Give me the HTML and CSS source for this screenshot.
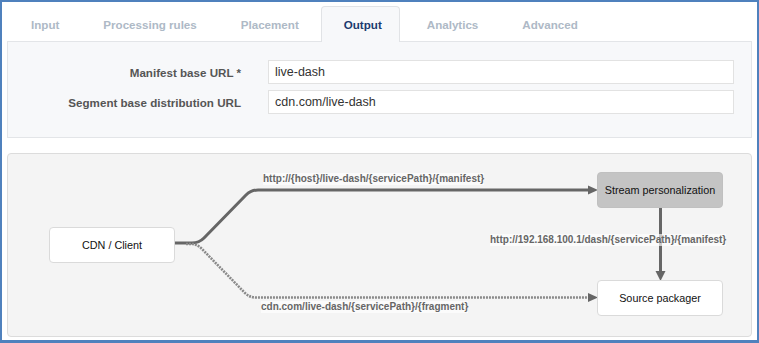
FILE: index.html
```html
<!DOCTYPE html>
<html>
<head>
<meta charset="utf-8">
<link rel="stylesheet" href="styles.css">
</head>
<body>
<div class="page">
  <div class="tabs">
    <div class="tab">Input</div>
    <div class="tab">Processing rules</div>
    <div class="tab">Placement</div>
    <div class="tab active">Output</div>
    <div class="tab">Analytics</div>
    <div class="tab">Advanced</div>
  </div>
  <div class="form-panel">
    <label class="label">Manifest base URL *</label>
    <div class="input">live-dash</div>
    <label class="label">Segment base distribution URL</label>
    <div class="input">cdn.com/live-dash</div>
  </div>
  <div class="diagram">
    <svg class="edges" width="743" height="182" viewBox="8 154 743 182">
      <path d="M175,243 L192,243 Q199,243 204,238 L246,195 Q251,190 258,190 L590,190" fill="none" stroke="#666" stroke-width="3"/>
      <polygon points="588,185.5 598,190 588,194.5" fill="#666"/>
      <path d="M186,244 L193,244 Q198,245 202,249 L244,292 Q249,297.5 256,297.5 L590,297.5" fill="none" stroke="#8a8a8a" stroke-width="2.6" stroke-dasharray="2 1"/>
      <polygon points="588,293 598,297.5 588,302" fill="#666"/>
      <path d="M660.5,208 L660.5,273" fill="none" stroke="#666" stroke-width="3"/>
      <polygon points="655.5,271 665.5,271 660.5,281" fill="#666"/>
    </svg>
    <div class="node node-client">CDN / Client</div>
    <div class="node node-stream">Stream personalization</div>
    <div class="node node-source">Source packager</div>
    <span class="edge-label label-top">http://{host}/live-dash/{servicePath}/{manifest}</span>
    <span class="edge-label label-mid">http://192.168.100.1/dash/{servicePath}/{manifest}</span>
    <span class="edge-label label-bottom">cdn.com/live-dash/{servicePath}/{fragment}</span>
  </div>
</div>
</body>
</html>
```
FILE: styles.css
```css
html, body {
  margin: 0;
  padding: 0;
}
body {
  width: 759px;
  height: 343px;
  box-sizing: border-box;
  border: 2px solid #4f81bd;
  border-bottom-width: 3px;
  background: #fff;
  font-family: "Liberation Sans", Arial, sans-serif;
  overflow: hidden;
}
.page {
  padding: 4px 5px 0 5px;
}
.tabs {
  display: flex;
  padding-left: 2px;
  height: 35px;
}
.tab {
  height: 36px;
  box-sizing: border-box;
  padding: 0 21px 1px;
  display: flex;
  align-items: center;
  font-size: 11.6px;
  font-weight: bold;
  color: #aeb9c6;
  border: 1px solid transparent;
  border-bottom: none;
  border-radius: 4px 4px 0 0;
  position: relative;
  z-index: 1;
}
.tab.active {
  background: #f7f8fa;
  border-color: #e1e3e6;
  color: #1b3b6f;
  padding: 0 17px 1px 22px;
  margin-right: 5px;
}
.form-panel {
  height: 97px;
  box-sizing: border-box;
  border: 1px solid #e3e5e8;
  background: #f7f8fa;
  padding: 18px 17px 23px 0;
  display: grid;
  grid-template-columns: 233px 1fr;
  grid-auto-rows: 24px;
  column-gap: 27px;
  row-gap: 6px;
}
.label {
  display: flex;
  align-items: center;
  justify-content: flex-end;
  font-size: 11.6px;
  font-weight: bold;
  color: #555;
}
.input {
  box-sizing: border-box;
  height: 24px;
  border: 1px solid #e2e2e2;
  background: #fff;
  padding: 0 6px;
  display: flex;
  align-items: center;
  font-size: 12.5px;
  color: #333;
}
.diagram {
  position: relative;
  margin-top: 15px;
  height: 184px;
  box-sizing: border-box;
  border: 1px solid #dcdcdc;
  border-radius: 4px;
  background: #f4f4f4;
}
.edges {
  position: absolute;
  left: 0;
  top: 0;
}
.node {
  position: absolute;
  width: 126px;
  height: 36px;
  box-sizing: border-box;
  border: 1px solid #dadada;
  border-radius: 4px;
  background: #fff;
  display: flex;
  align-items: center;
  justify-content: center;
  font-size: 10.8px;
  color: #111;
}
.node-client {
  left: 41px;
  top: 73px;
}
.node-stream {
  left: 589px;
  top: 18px;
  background: #c4c4c4;
  border-color: #c0c0c0;
}
.node-source {
  left: 589px;
  top: 126px;
}
.edge-label {
  position: absolute;
  font-size: 10px;
  font-weight: bold;
  color: #666;
  background: rgba(255, 255, 255, 0.65);
  line-height: 12px;
  white-space: nowrap;
}
.label-top {
  left: 255px;
  top: 19px;
}
.label-mid {
  left: 482px;
  top: 80px;
}
.label-bottom {
  left: 253px;
  top: 147px;
}
```
